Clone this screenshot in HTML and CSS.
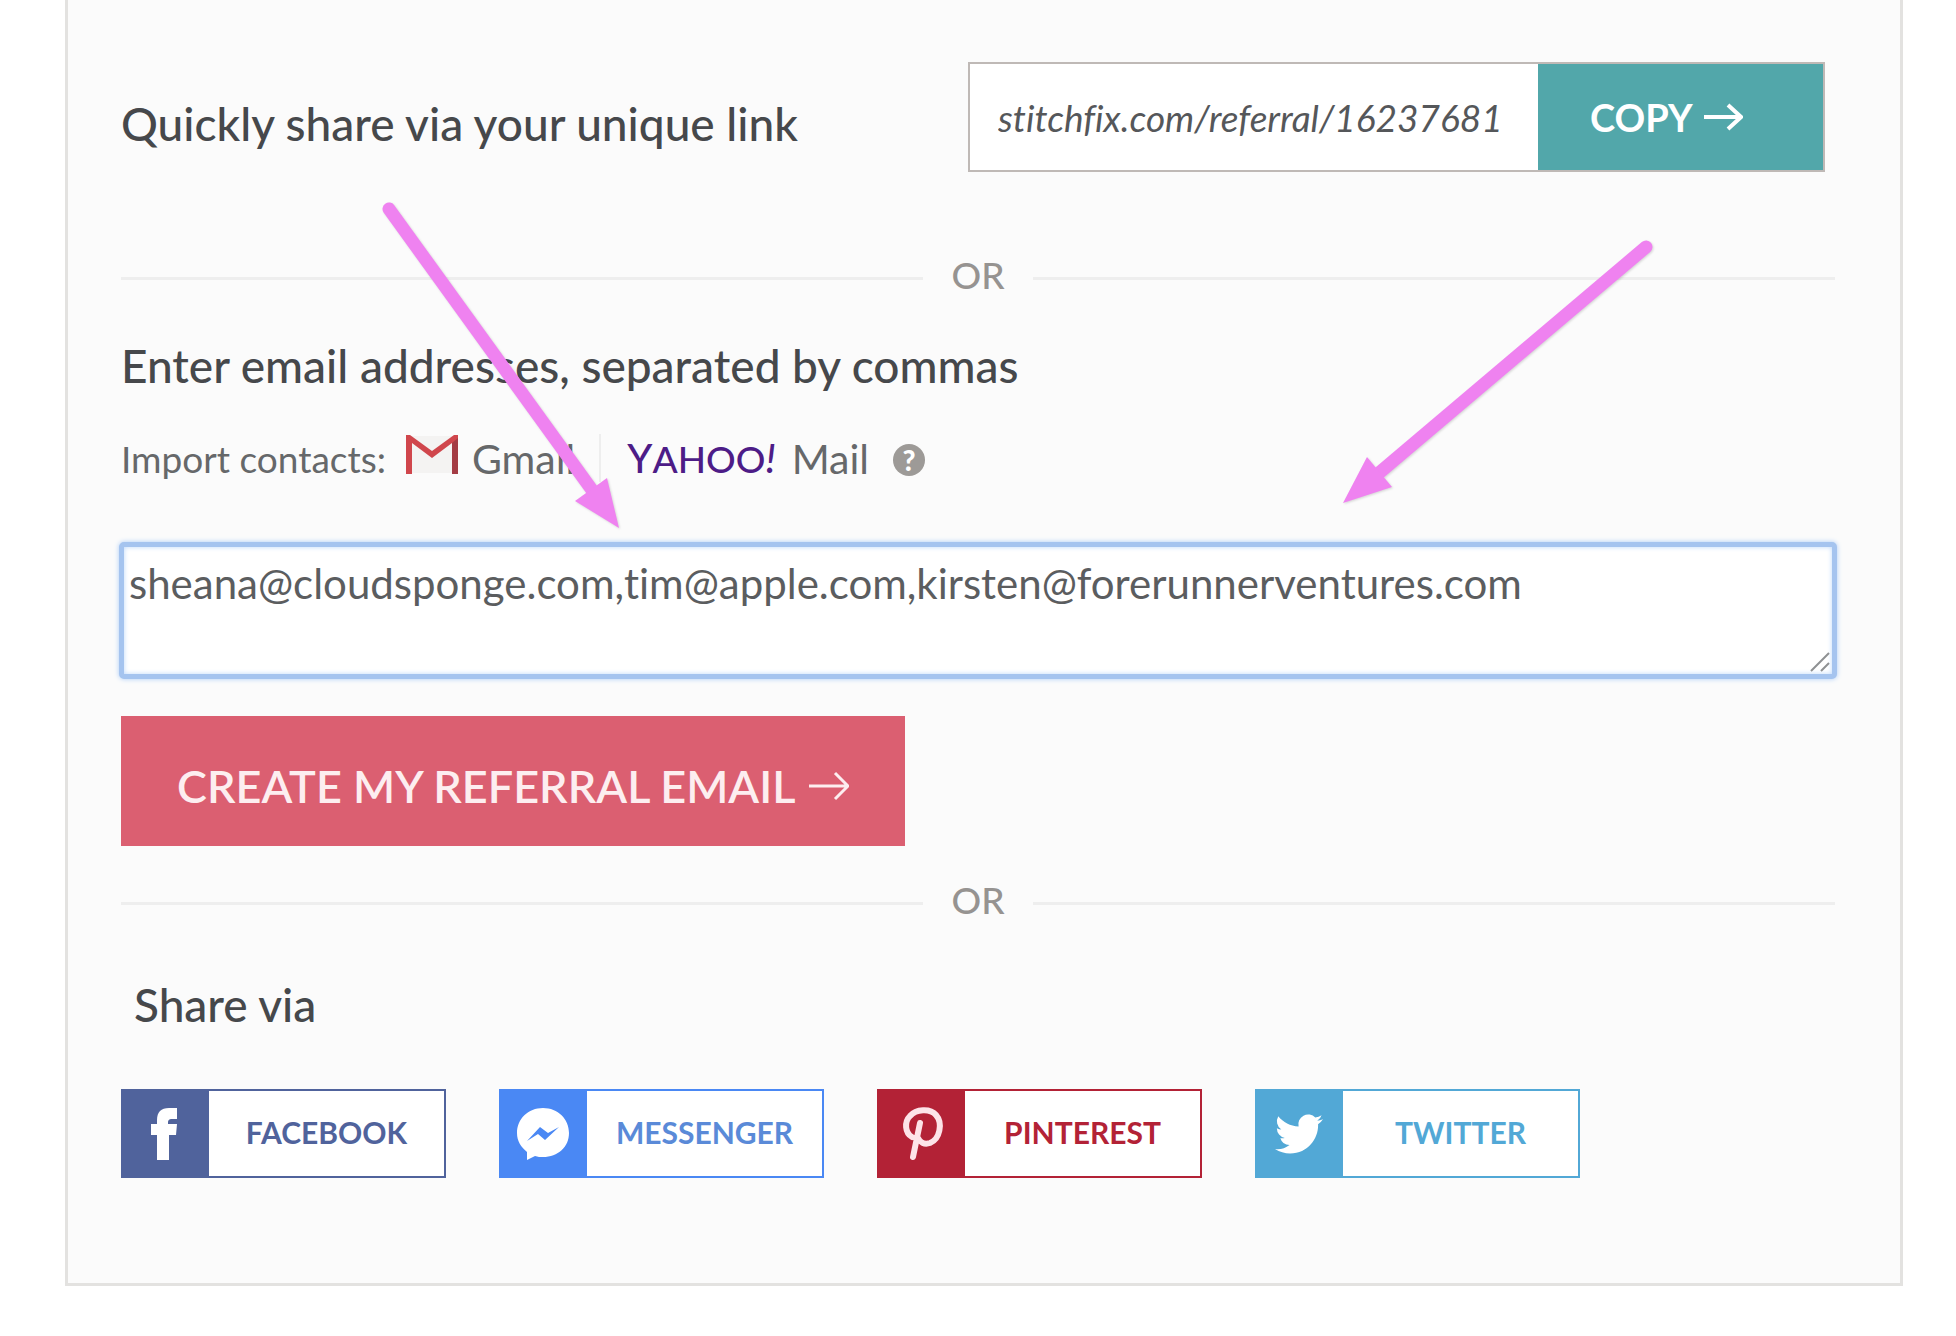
FILE: index.html
```html
<!DOCTYPE html>
<html lang="en">

<head>
    <meta charset="UTF-8">
    <meta name="viewport" content="width=device-width, initial-scale=1.0">
    <title>Refer a friend</title>
    <link rel="stylesheet" href="styles.css">
</head>

<body>
    <main class="panel">
        <div class="link-row">
            <label class="title" for="referralLink">Quickly share via your unique link</label>
            <div class="link-box">
                <input type="text" id="referralLink" value="stitchfix.com/referral/16237681" readonly>
                <button type="button" class="copy-button">COPY
                    <svg class="arrow" viewBox="0 0 40 32" aria-hidden="true">
                        <path d="M1 16H37M25 4L38 16L25 28" />
                    </svg>
                </button>
            </div>
        </div>

        <div class="divider"><span>OR</span></div>

        <label class="title" for="emails">Enter email addresses, separated by commas</label>
        <div class="import-row">
            <span class="import-label">Import contacts:</span>
            <a href="#gmail" class="provider gmail">
                <svg class="gmail-icon" viewBox="0 0 52 40" aria-hidden="true">
                    <path class="gmail-paper" d="M2 2H50V39H2Z" />
                    <path class="gmail-edge" d="M0 1H4L26 17L48 1H52V40H46V9L26 24L6 9V40H0Z" />
                    <path class="gmail-shade" d="M46 9L52 4V40H46Z" />
                </svg>
                Gmail
            </a>
            <a href="#yahoo" class="provider">
                <span class="yahoo"><b>Y</b>AHOO<i>!</i></span>
                Mail
            </a>
            <button type="button" class="help" aria-label="Help">?</button>
        </div>

        <div class="email-box">
            <textarea id="emails">sheana@cloudsponge.com,tim@apple.com,kirsten@forerunnerventures.com</textarea>
            <svg class="grip" viewBox="0 0 20 20" aria-hidden="true">
                <path d="M1 19L19 1M11 19L19 11" />
            </svg>
        </div>

        <button type="button" class="create-button">CREATE MY REFERRAL EMAIL
            <svg class="arrow" viewBox="0 0 40 32" aria-hidden="true">
                <path d="M0 16H38M26 3L39 16L26 29" />
            </svg>
        </button>

        <div class="divider second"><span>OR</span></div>

        <h2 class="title share-title">Share via</h2>
        <div class="share-row">
            <a href="#facebook" class="share facebook">
                <svg viewBox="0 0 88 88" aria-hidden="true">
                    <path d="M36 70V45H30V34H36V30C36 22 40 18 48 18H56V29H51C48 29 47 30 47 33V34H56L55 45H48V70Z" />
                </svg>
                <span>FACEBOOK</span>
            </a>
            <a href="#messenger" class="share messenger">
                <svg viewBox="0 0 88 88" aria-hidden="true">
                    <path d="M44 18C29 18 18 29 18 43C18 51 22 57 28 62V70L36 66C39 67 41 67 44 67C59 67 70 57 70 43C70 29 59 18 44 18Z" />
                    <path class="bolt" d="M28 51L41 37L49 43L60 37L46 50L39 44Z" />
                </svg>
                <span>MESSENGER</span>
            </a>
            <a href="#pinterest" class="share pinterest">
                <svg viewBox="0 0 88 88" aria-hidden="true">
                    <path d="M35 47C28 43 27 32 33 26C39 19 53 18 59 25C66 33 63 49 53 53C47 55 43 52 41 48M43 33L36 67" />
                </svg>
                <span>PINTEREST</span>
            </a>
            <a href="#twitter" class="share twitter">
                <svg viewBox="0 0 88 88" aria-hidden="true">
                    <path transform="translate(20 20) scale(2)" d="M23.95 4.57a10 10 0 0 1-2.82.77 4.96 4.96 0 0 0 2.16-2.72c-.95.56-2 .96-3.13 1.18a4.92 4.92 0 0 0-8.38 4.48C7.69 8.09 4.07 6.13 1.64 3.16a4.9 4.9 0 0 0 1.52 6.57 4.9 4.9 0 0 1-2.23-.61v.06a4.92 4.92 0 0 0 3.95 4.83 5 5 0 0 1-2.21.08 4.94 4.94 0 0 0 4.6 3.42A9.87 9.87 0 0 1 0 19.54a14 14 0 0 0 7.55 2.21c9.05 0 14-7.5 14-13.98 0-.21 0-.42-.02-.63a9.94 9.94 0 0 0 2.46-2.55z" />
                </svg>
                <span>TWITTER</span>
            </a>
        </div>
    </main>

    <svg class="pointers" viewBox="0 0 1956 1336" aria-hidden="true">
        <path class="shaft" d="M389 209L592 490M1646 247L1379 473" />
        <path class="head" d="M619 528L575 501L607 478ZM1343 503L1367 457L1392 487Z" />
    </svg>
</body>

</html>
```
FILE: styles.css
```css
* {
    box-sizing: border-box;
}

body {
    font-family: Lato, "Open Sans", sans-serif;
    font-variant-ligatures: none;
    margin: 0;
    position: relative;
    background-color: #fff;
    color: #46484b;
}

button,
input,
textarea {
    font-family: inherit;
    font-variant-ligatures: none;
    margin: 0;
}

.panel {
    display: flex;
    flex-direction: column;
    margin: 0 53px 0 65px;
    padding: 62px 65px 105px 53px;
    background-color: #fbfbfb;
    border: 3px solid #e3e2e0;
    border-top: none;
}

.title {
    margin: 0;
    font-size: 46px;
    font-weight: 500;
    line-height: 56px;
}

.link-row {
    display: flex;
    align-items: center;
    justify-content: space-between;
}

.link-row .title {
    padding-top: 14px;
}

.link-box {
    display: flex;
    width: 50%;
    height: 110px;
    margin-right: 10px;
    border: 2px solid #bfb9b6;
    background-color: #fff;
}

.link-box input {
    flex: 1;
    min-width: 0;
    padding: 0 0 0 28px;
    border: none;
    background: none;
    color: #55575a;
    font-size: 37px;
    font-style: italic;
}

.copy-button,
.create-button {
    display: flex;
    align-items: center;
    gap: 10px;
    border: none;
    color: #fff;
    cursor: pointer;
}

.copy-button {
    width: 285px;
    padding: 0 0 0 52px;
    background-color: #52a7aa;
    font-size: 38px;
    font-weight: bold;
}

.arrow {
    width: 40px;
    height: 32px;
    fill: none;
    stroke: currentColor;
    stroke-width: 4;
}

.divider {
    display: flex;
    align-items: center;
    gap: 28px;
    height: 40px;
    margin: 86px 0 40px;
    color: #969391;
    font-size: 37px;
    font-weight: 500;
}

.divider span {
    padding-bottom: 8px;
}

.divider::before,
.divider::after {
    content: "";
    flex: 1;
    height: 3px;
    background-color: #eee;
}

.import-row {
    display: flex;
    align-items: center;
    height: 48px;
    margin: 38px 0 62px;
    color: #66686a;
    font-size: 37px;
}

.provider {
    display: flex;
    align-items: center;
    gap: 16px;
    height: 48px;
    color: inherit;
    font-size: 41px;
    text-decoration: none;
}

.gmail {
    gap: 14px;
    margin-left: 20px;
    margin-right: 26px;
    padding-right: 24px;
    border-right: 2px solid #eee;
}

.gmail-icon {
    width: 52px;
    height: 40px;
    margin-bottom: 8px;
}

.gmail-paper {
    fill: #f4f3f2;
}

.gmail-edge {
    fill: #d0464c;
}

.gmail-shade {
    fill: #a43c44;
}

.yahoo {
    color: #4d1c87;
    font-size: 37px;
    font-weight: 500;
}

.yahoo b,
.yahoo i {
    font-size: 40px;
    font-weight: 500;
}

.help {
    width: 32px;
    height: 32px;
    margin-left: 24px;
    padding: 0;
    border: none;
    border-radius: 50%;
    background-color: #9d9a97;
    color: #fff;
    font-size: 28px;
    font-weight: 900;
    line-height: 32px;
}

.import-label,
.provider {
    margin-top: 4px;
}

.help {
    margin-top: 8px;
}

.email-box {
    position: relative;
    height: 137px;
    margin: 0 -2px;
}

.email-box textarea {
    display: block;
    width: 100%;
    height: 100%;
    padding: 12px 5px;
    border: 5px solid #a5c4ef;
    border-radius: 5px;
    outline: none;
    box-shadow: 0 0 5px #a9cbf8, inset 0 0 5px #bcd8fb;
    background-color: #fff;
    color: #5b5d5f;
    font-size: 42px;
    line-height: 48px;
    resize: none;
    overflow: hidden;
}

.grip {
    position: absolute;
    right: 7px;
    bottom: 7px;
    width: 20px;
    height: 20px;
    fill: none;
    stroke: #8f9193;
    stroke-width: 2;
}

.create-button {
    align-self: flex-start;
    gap: 14px;
    height: 130px;
    margin-top: 37px;
    padding: 10px 56px 0;
    background-color: #db5f71;
    color: #fdeef0;
    font-size: 45px;
    font-weight: 600;
}

.create-button .arrow {
    stroke-width: 3;
}

.divider.second {
    margin: 37px 0 54px;
}

.share-title {
    padding-left: 13px;
}

.share-row {
    display: flex;
    gap: 53px;
    margin-top: 56px;
}

.share {
    display: flex;
    align-items: center;
    width: 325px;
    height: 89px;
    border: 2px solid;
    background-color: #fff;
    font-size: 30px;
    font-weight: bold;
    text-decoration: none;
}

.share svg {
    width: 88px;
    height: 88px;
    background-color: currentColor;
    margin: -2px 0 -2px -2px;
}

.share path {
    fill: #fff;
}

.share span {
    flex: 1;
    padding-bottom: 4px;
    text-align: center;
}

.facebook {
    color: #50639c;
}

.messenger {
    color: #4a88f4;
}

.messenger .bolt {
    fill: currentColor;
}

.messenger span {
    color: #5a8ad8;
}

.pinterest {
    color: #b32236;
}

.pinterest path {
    fill: none;
    stroke: #fde3e8;
    stroke-width: 6;
    stroke-linecap: round;
}

.twitter {
    color: #52a8d6;
}

/* arrows drawn over the form */
.pointers {
    position: absolute;
    top: 0;
    left: 0;
    width: 100%;
    pointer-events: none;
    filter: drop-shadow(1px 1px 1px rgba(0, 0, 0, 0.15));
}

.pointers .shaft {
    fill: none;
    stroke: #ef82f0;
    stroke-width: 13;
    stroke-linecap: round;
}

.pointers .head {
    fill: #ef82f0;
}
```
